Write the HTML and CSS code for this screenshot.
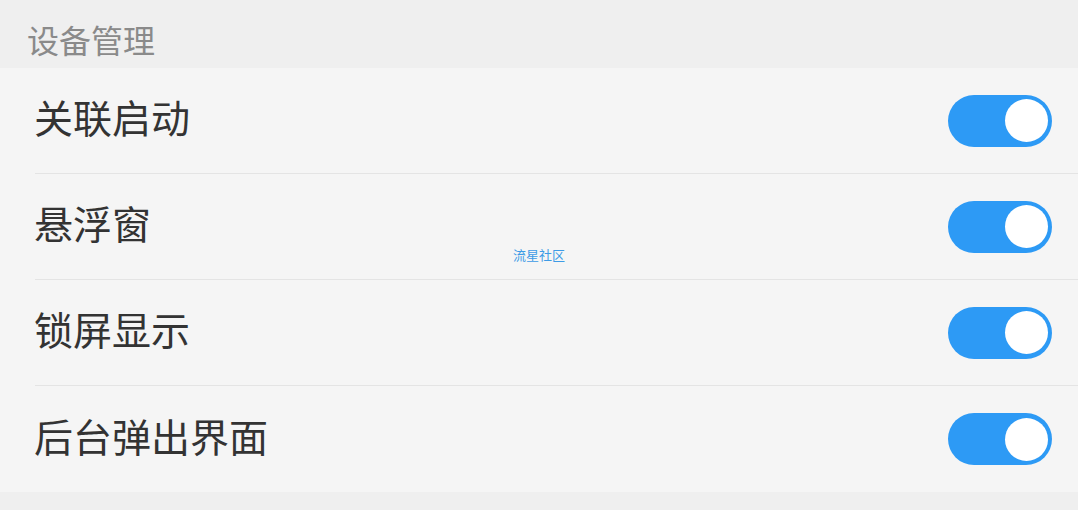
FILE: index.html
```html
<!DOCTYPE html>
<html lang="zh-CN">
<head>
<meta charset="utf-8">
<link rel="stylesheet" href="styles.css">
</head>
<body>
<div class="page">
  <div class="section-title">设备管理</div>
  <div class="list">
    <div class="row">
      <span class="label">关联启动</span>
      <span class="toggle"><span class="knob"></span></span>
    </div>
    <div class="row">
      <span class="label">悬浮窗</span>
      <span class="toggle"><span class="knob"></span></span>
      <span class="watermark">流星社区</span>
    </div>
    <div class="row">
      <span class="label">锁屏显示</span>
      <span class="toggle"><span class="knob"></span></span>
    </div>
    <div class="row last">
      <span class="label">后台弹出界面</span>
      <span class="toggle"><span class="knob"></span></span>
    </div>
  </div>
</div>
</body>
</html>
```
FILE: styles.css
```css
html, body {
  margin: 0;
  padding: 0;
  background: #efefef;
  font-family: "Noto Sans CJK SC", "Noto Sans", sans-serif;
}
.page {
  width: 1078px;
  height: 510px;
  overflow: hidden;
}
.section-title {
  height: 68px;
  box-sizing: border-box;
  padding-left: 27px;
  padding-top: 10px;
  display: flex;
  align-items: center;
  font-size: 32px;
  color: #8a8a8a;
  line-height: 1;
}
.list {
  background: #f5f5f5;
  padding-left: 35px;
}
.row {
  position: relative;
  height: 106px;
  box-sizing: border-box;
  display: flex;
  align-items: center;
  justify-content: space-between;
  padding-right: 26px;
  border-bottom: 1px solid #e4e4e4;
}
.row.last {
  border-bottom: none;
}
.label {
  font-size: 39px;
  color: #333333;
  line-height: 1;
  margin-left: -1px;
  margin-bottom: 8px;
}
.toggle {
  width: 104px;
  height: 52px;
  border-radius: 26px;
  background: #2d9af5;
  display: flex;
  align-items: center;
  justify-content: flex-end;
  padding-right: 4px;
  box-sizing: border-box;
}
.knob {
  width: 43px;
  height: 43px;
  border-radius: 50%;
  background: #ffffff;
}
.watermark {
  position: absolute;
  left: 478px;
  top: 74px;
  font-size: 13px;
  color: #3d9be6;
  line-height: 1;
}
```
